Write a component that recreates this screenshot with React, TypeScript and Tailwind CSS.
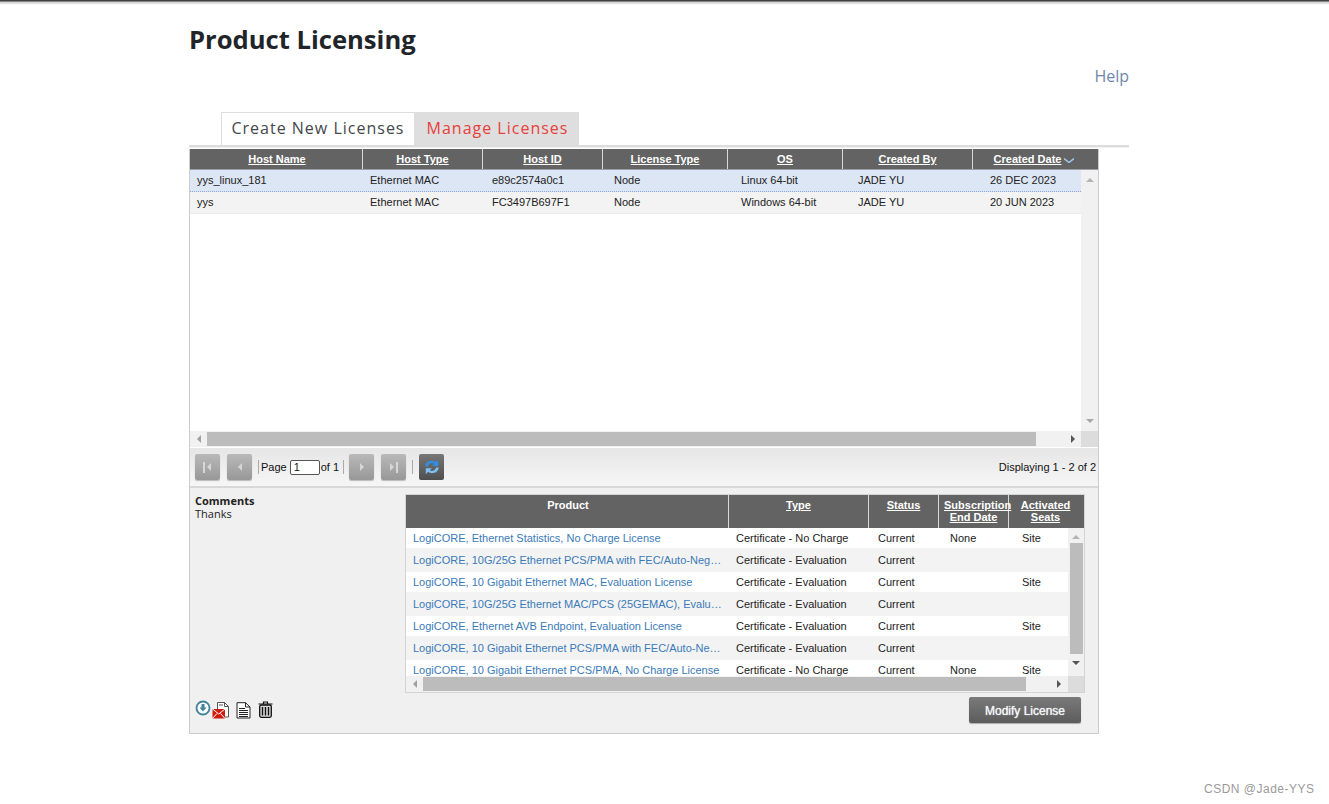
const hostHeads = [
  { label: "Host Name", w: "w-[173px] pl-[2px]" },
  { label: "Host Type", w: "w-[120px]" },
  { label: "Host ID", w: "w-[120px]" },
  { label: "License Type", w: "w-[125px]" },
  { label: "OS", w: "w-[115px]" },
  { label: "Created By", w: "w-[130px]" },
  { label: "Created Date", w: "w-[125px] pr-[3px]", sort: true },
];

const hostCols = ["w-[173px]", "w-[122px]", "w-[122px]", "w-[127px]", "w-[117px]", "w-[132px]", "w-[98px]"];

const hosts = [
  ["yys_linux_181", "Ethernet MAC", "e89c2574a0c1", "Node", "Linux 64-bit", "JADE YU", "26 DEC 2023"],
  ["yys", "Ethernet MAC", "FC3497B697F1", "Node", "Windows 64-bit", "JADE YU", "20 JUN 2023"],
];

const products = [
  ["LogiCORE, Ethernet Statistics, No Charge License", "Certificate - No Charge", "Current", "None", "Site"],
  ["LogiCORE, 10G/25G Ethernet PCS/PMA with FEC/Auto-Neg…", "Certificate - Evaluation", "Current", "", ""],
  ["LogiCORE, 10 Gigabit Ethernet MAC, Evaluation License", "Certificate - Evaluation", "Current", "", "Site"],
  ["LogiCORE, 10G/25G Ethernet MAC/PCS (25GEMAC), Evalu…", "Certificate - Evaluation", "Current", "", ""],
  ["LogiCORE, Ethernet AVB Endpoint, Evaluation License", "Certificate - Evaluation", "Current", "", "Site"],
  ["LogiCORE, 10 Gigabit Ethernet PCS/PMA with FEC/Auto-Ne…", "Certificate - Evaluation", "Current", "", ""],
  ["LogiCORE, 10 Gigabit Ethernet PCS/PMA, No Charge License", "Certificate - No Charge", "Current", "None", "Site"],
];

function Arrow({ dir, color = "#9a9a9a" }: { dir: "up" | "down" | "left" | "right"; color?: string }) {
  const pts = {
    up: "0,6 5,1 10,6",
    down: "0,1 5,6 10,1",
    left: "6,0 1,5 6,10",
    right: "1,0 6,5 1,10",
  }[dir];
  const vertical = dir === "up" || dir === "down";
  return (
    <svg width={vertical ? 8 : 6} height={vertical ? 6 : 8} viewBox={vertical ? "0 0 10 7" : "0 0 7 10"}>
      <polygon points={pts} fill={color} />
    </svg>
  );
}

function PagerButton({ kind }: { kind: "first" | "prev" | "next" | "last" }) {
  return (
    <div className="w-[25px] h-[26px] rounded-[2px] bg-gradient-to-b from-[#b9b9b9] to-[#989898] shadow-[0_1px_1px_#bbb] flex items-center justify-center gap-[1px]">
      {kind === "first" && <div className="w-[2px] h-[11px] bg-[#d6d6d6]" />}
      {(kind === "first" || kind === "prev") && <Arrow dir="left" color="#d6d6d6" />}
      {(kind === "last" || kind === "next") && <Arrow dir="right" color="#d6d6d6" />}
      {kind === "last" && <div className="w-[2px] h-[11px] bg-[#d6d6d6]" />}
    </div>
  );
}

function RefreshIcon() {
  return (
    <svg width="18" height="18" viewBox="0 0 16 16" fill="none">
      <path d="M2 7.500C2.500 4 5 2.500 8 2.500c1.500 0 2.600.5 3.400 1.200L13.500 1.500V7H8l2-1.900C9.400 4.700 8.700 4.500 8 4.500 6 4.500 4.800 5.800 4.400 7.500Z" fill="#2f8fe8" />
      <path d="M14 8.500C13.500 12 11 13.500 8 13.500c-1.500 0-2.600-.5-3.400-1.200L2.500 14.500V9H8l-2 1.900c.6.400 1.300.6 2 .6 2 0 3.200-1.300 3.600-3Z" fill="#7cc2f7" />
    </svg>
  );
}

function DownloadIcon() {
  return (
    <svg width="16" height="16" viewBox="0 0 16 16" fill="none">
      <circle cx="8" cy="8" r="6.500" stroke="#3f8299" strokeWidth="1.800" fill="#fff" />
      <path d="M6.500 4h3v3.500H11.500L8 11.500 4.500 7.500h2Z" fill="#3f8299" />
    </svg>
  );
}

function MailDocIcon() {
  return (
    <svg width="18" height="18" viewBox="0 0 18 18" fill="none">
      <path d="M5.500 .500h7l4 4v10.500h-11Z" fill="#fff" stroke="#555" />
      <path d="M12.500 .500v4h4M7 3h4" stroke="#555" />
      <rect x="0.500" y="7" width="12.500" height="9.500" fill="#d01a0d" />
      <path d="M0.500 7l6.250 5 6.250-5M0.500 16.500l4.500-5M13 16.500l-4.500-5" stroke="#fff" strokeWidth="1" />
    </svg>
  );
}

function DocIcon() {
  return (
    <svg width="15" height="17" viewBox="0 0 15 17" fill="none">
      <path d="M1 .700h8.500L14 5v11H1Z" fill="#fff" stroke="#222" />
      <path d="M9.500 .700V5H14M3 6.500h6M3 8.500h9M3 10.500h9M3 12.500h9M3 14.500h9" stroke="#222" />
    </svg>
  );
}

function TrashIcon() {
  return (
    <svg width="15" height="17" viewBox="0 0 15 17" fill="none">
      <path d="M.500 3h14M5.500 2.500V1h4v1.500" stroke="#111" strokeWidth="1.200" />
      <rect x="1.700" y="4" width="11.600" height="12.300" rx="1.500" fill="#d8d8d8" stroke="#111" strokeWidth="1.300" />
      <path d="M4.500 6v8.500M7.500 6v8.500M10.500 6v8.500" stroke="#111" strokeWidth="1.400" />
    </svg>
  );
}

export default function App() {
  return (
    <div className="relative h-[804px] overflow-hidden bg-white font-['Liberation_Sans',Arial,sans-serif] text-[11px] text-[#222]">
      <div className="h-[5px] bg-gradient-to-b from-[#222] via-[#d4d4d4] to-white" />

      <div className="ml-[189px] w-[940px]">
        <h1 className="mt-[16px] h-[38px] font-['Open_Sans',sans-serif] text-[25.6px] leading-[38px] font-bold text-[#212529]">
          Product Licensing
        </h1>
        <div className="mt-[7px] h-[20px] text-right font-['Open_Sans',sans-serif] text-[16px] leading-[20px] text-[#6f87ab]">
          Help
        </div>

        <div className="mt-[26px] ml-[32px] flex h-[33px] font-['Open_Sans',sans-serif] text-[16px] tracking-[1px]">
          <div className="flex w-[194px] items-center justify-center border border-b-0 border-[#dedede] bg-white pb-[2px] text-[#44474c]">
            Create New Licenses
          </div>
          <div className="flex w-[164px] items-center justify-center bg-[#dedede] pb-[2px] pl-px text-[#e8403c]">
            Manage Licenses
          </div>
        </div>
        <div className="h-[3px] border-t-2 border-[#dcdcdc] bg-[#f1f1f1]" />

        <div className="mt-px w-[910px] border-x border-b border-[#cccccc]">
          {/* hosts table */}
          <div className="flex h-[21px] items-stretch bg-[#636363] font-bold text-white border-b border-[#9a9fa8] w-[908px]">
            {hostHeads.map((h, i) => (
              <div
                key={h.label}
                className={`${h.w} flex items-center justify-center gap-[3px] ${i < hostHeads.length - 1 ? "border-r border-[#d8d8d8]" : ""}`}
              >
                <span className="underline">{h.label}</span>
                {h.sort && (
                  <svg width="10" height="5" viewBox="0 0 10 5" className="mt-[2px]">
                    <path d="M0 0.500L5 4.500L10 0.500" stroke="#9cc7ee" strokeWidth="1.500" fill="none" />
                  </svg>
                )}
              </div>
            ))}
          </div>

          <div className="flex h-[261px] w-[908px]">
            <div className="w-[891px]">
              {hosts.map((row, r) => (
                <div
                  key={row[0]}
                  className={`flex h-[22px] items-center ${r === 0 ? "border-b border-dotted border-[#8ea9d8] bg-[#dde6f5]" : "border-b border-[#ececec] bg-[#f3f3f3]"}`}
                >
                  {row.map((cell, c) => (
                    <div key={c} className={`${hostCols[c]} pl-[7px] text-[#222]`}>
                      {cell}
                    </div>
                  ))}
                </div>
              ))}
            </div>
            <div className="flex w-[17px] flex-col items-center justify-between bg-[#f1f1f1] py-[7px]">
              <Arrow dir="up" color="#b4b4b4" />
              <Arrow dir="down" color="#a8a8a8" />
            </div>
          </div>

          <div className="flex h-[16px] w-[908px] bg-[#f1f1f1]">
            <div className="flex w-[17px] items-center justify-center">
              <Arrow dir="left" color="#a0a0a0" />
            </div>
            <div className="my-px w-[829px] bg-[#bcbcbc]" />
            <div className="flex w-[45px] items-center justify-end pr-[5px]">
              <Arrow dir="right" color="#555" />
            </div>
            <div className="w-[17px] bg-[#dcdcdc]" />
          </div>

          <div className="mt-px flex h-[38px] items-center bg-gradient-to-b from-[#e6e6e6] to-[#f6f6f6] pl-[5px] text-[11px] text-[#111]">
            <PagerButton kind="first" />
            <div className="ml-[7px]">
              <PagerButton kind="prev" />
            </div>
            <div className="ml-[6px] h-[14px] border-l border-[#aaa]" />
            <span className="ml-[2px]">Page</span>
            <div className="ml-[3px] h-[15px] w-[30px] rounded-[2px] border border-[#555] bg-white pl-[3px] leading-[13px]">1</div>
            <span className="ml-[1px]">of 1</span>
            <div className="ml-[4px] h-[14px] border-l border-[#aaa]" />
            <div className="ml-[5px]">
              <PagerButton kind="next" />
            </div>
            <div className="ml-[7px]">
              <PagerButton kind="last" />
            </div>
            <div className="ml-[6px] h-[14px] border-l border-[#aaa]" />
            <div className="ml-[6px] flex h-[26px] w-[25px] items-center justify-center rounded-[2px] bg-gradient-to-b from-[#777] to-[#4f4f4f]">
              <RefreshIcon />
            </div>
            <span className="ml-auto mr-[2px] w-fit whitespace-nowrap">Displaying 1 - 2 of 2</span>
          </div>
          <div className="h-[2px] bg-[#d8d8d8]" />

          {/* details */}
          <div className="flex h-[245px] bg-[#f0f0f0]">
            <div className="flex w-[215px] flex-col justify-between pb-[13px] pl-[5px] pt-[6px]">
              <div className="font-['Open_Sans',sans-serif] text-[11px] leading-[13px] text-[#222]">
                <div className="font-bold">Comments</div>
                <div>Thanks</div>
              </div>
              <div className="flex items-start">
                <DownloadIcon />
                <div className="ml-px mt-[2px]"><MailDocIcon /></div>
                <div className="ml-[6px] mt-[2px]"><DocIcon /></div>
                <div className="ml-[7px] mt-px"><TrashIcon /></div>
              </div>
            </div>

            <div className="w-[680px] pt-[6px]">
              <div className="border border-[#d4d4d4] bg-white">
                <div className="flex h-[33px] items-stretch bg-[#636363] font-bold leading-[12px] text-white">
                  <div className="w-[323px] border-r border-[#d8d8d8] pl-[2px] pt-[4px] text-center">Product</div>
                  <div className="w-[140px] border-r border-[#d8d8d8] pt-[4px] text-center underline">Type</div>
                  <div className="w-[70px] border-r border-[#d8d8d8] pt-[4px] text-center underline">Status</div>
                  <div className="w-[70px] border-r border-[#d8d8d8] pt-[4px] text-center whitespace-nowrap">
                    <span className="ml-[5px] underline">Subscription</span>
                    <br />
                    <span className="underline">End Date</span>
                  </div>
                  <div className="w-[75px] pr-[2px] pt-[4px] text-center underline">
                    Activated
                    <br />
                    Seats
                  </div>
                </div>

                <div className="flex h-[148px]">
                  <div className="w-[662px] overflow-hidden">
                    {products.map((p, r) => (
                      <div
                        key={p[0]}
                        className={`flex h-[22px] items-center border-b-2 border-[#f3f3f3] ${r % 2 ? "bg-[#f3f3f3]" : "bg-white"}`}
                      >
                        <div className="w-[323px] whitespace-nowrap pl-[7px] text-[#3a7ab8]">{p[0]}</div>
                        <div className="w-[142px] pl-[7px]">{p[1]}</div>
                        <div className="w-[72px] pl-[7px]">{p[2]}</div>
                        <div className="w-[72px] pl-[7px]">{p[3]}</div>
                        <div className="w-[53px] pl-[7px]">{p[4]}</div>
                      </div>
                    ))}
                  </div>
                  <div className="flex w-[16px] flex-col items-center bg-[#f1f1f1] pt-[6px]">
                    <Arrow dir="up" color="#b4b4b4" />
                    <div className="mt-[3px] h-[111px] w-[13px] bg-[#bcbcbc]" />
                    <div className="mt-[6px]"><Arrow dir="down" color="#555" /></div>
                  </div>
                </div>

                <div className="flex h-[16px] bg-[#f1f1f1]">
                  <div className="flex w-[17px] items-center justify-center">
                    <Arrow dir="left" color="#a0a0a0" />
                  </div>
                  <div className="my-px w-[603px] bg-[#bcbcbc]" />
                  <div className="flex w-[42px] items-center justify-end pr-[6px]">
                    <Arrow dir="right" color="#555" />
                  </div>
                  <div className="w-[16px] bg-[#dcdcdc]" />
                </div>
              </div>

              <div className="mt-[4px] flex justify-end pr-[4px]">
                <button className="h-[26px] w-[112px] rounded-[2px] bg-gradient-to-b from-[#7a7a7a] to-[#5c5c5c] pt-[2px] text-[12px] font-normal text-[#f2f5f8] [text-shadow:0_0_1px_#fff] shadow-[0_1px_1px_#aaa]">
                  Modify License
                </button>
              </div>
            </div>
          </div>
        </div>
      </div>

      <div className="absolute left-[1204px] top-[782px] text-[12px] leading-[14px] tracking-[0.5px] text-[#9a9a9a]">
        CSDN @Jade-YYS
      </div>
    </div>
  );
}
